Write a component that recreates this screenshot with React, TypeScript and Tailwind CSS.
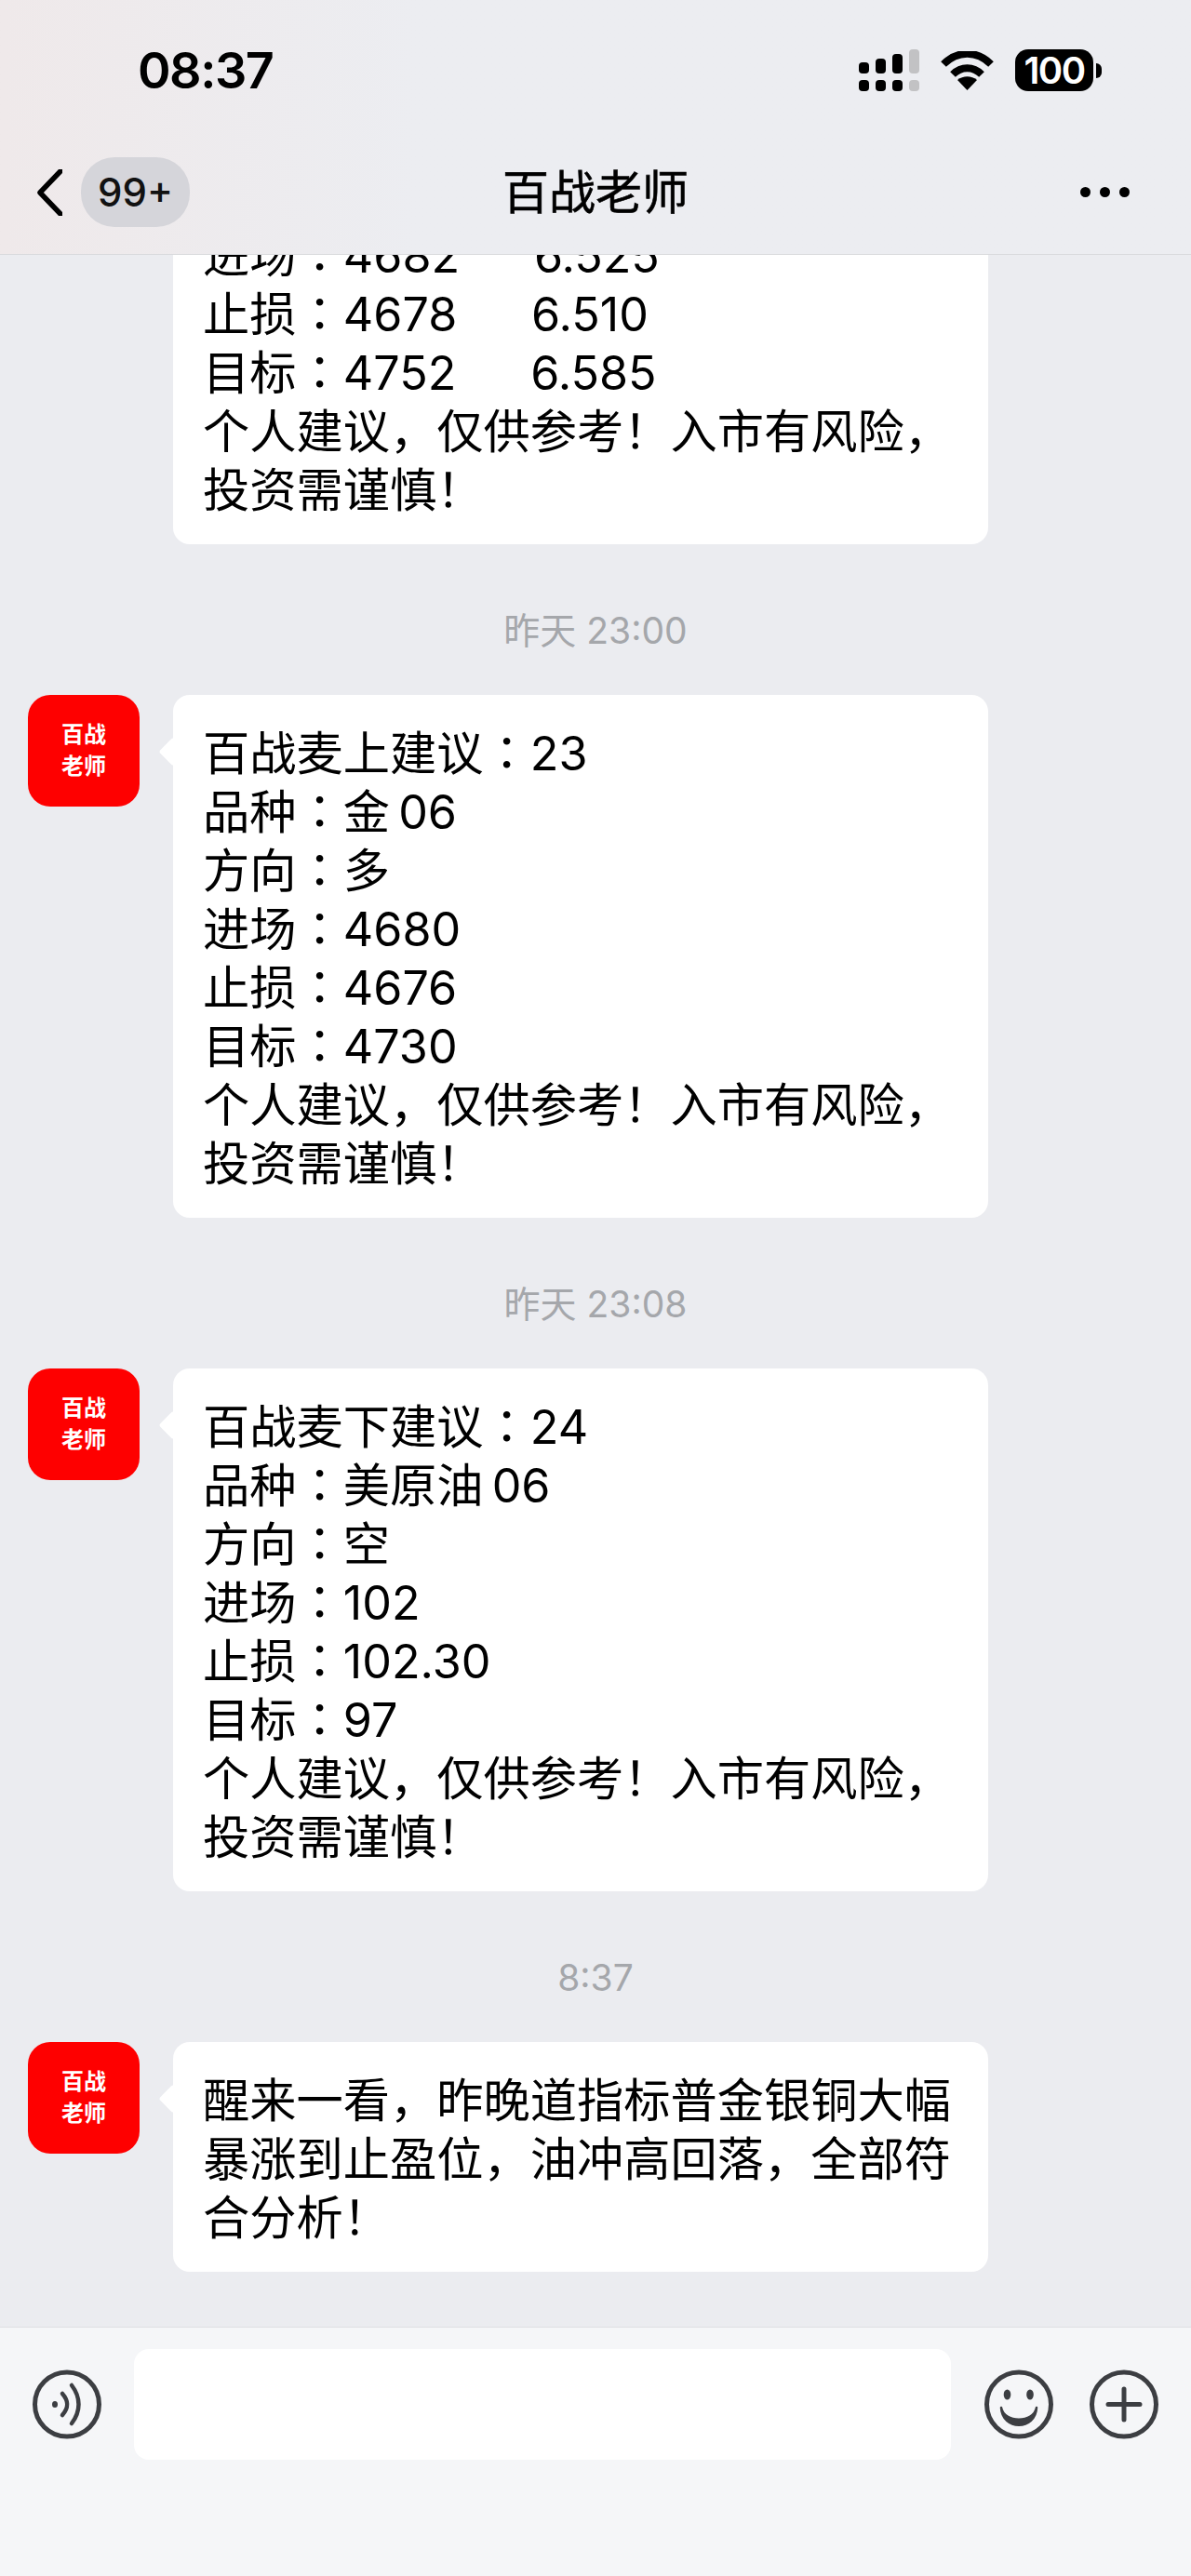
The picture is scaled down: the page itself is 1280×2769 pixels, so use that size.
import { type ReactNode } from 'react';

const FONT = "font-['Inter','Noto_Sans_CJK_SC',sans-serif]";

const NOTICE = '个人建议，仅供参考！入市有风险，\n投资需谨慎！';

const messages = [
  {
    time: '昨天 23:00',
    text: `百战麦上建议：23\n品种：金\u200906\n方向：多\n进场：4680\n止损：4676\n目标：4730\n${NOTICE}`,
  },
  {
    time: '昨天 23:08',
    text: `百战麦下建议：24\n品种：美原油\u200906\n方向：空\n进场：102\n止损：102.30\n目标：97\n${NOTICE}`,
  },
  {
    time: '8:37',
    text: '醒来一看，昨晚道指标普金银铜大幅暴涨到止盈位，油冲高回落，全部符合分析！',
  },
];

// the SC face pushes the full-width colon to the left of its box, the JP one centres it.
// inline-block with a short line height keeps the other font's metrics out of the line box.
function BubbleText({ text }: { text: string }) {
  return (
    <>
      {text.split('\n').map((line, i) => {
        const [label, value] = line.split('：');
        return (
          <div key={i}>
            {value === undefined ? (
              line
            ) : (
              <>
                <span>{label}</span>
                <span className="inline-block font-['Noto_Sans_CJK_JP'] leading-[50px]">：</span>
                <span>{value}</span>
              </>
            )}
          </div>
        );
      })}
    </>
  );
}

function Signal() {
  return (
    <svg width="65" height="45" viewBox="0 0 65 45" className="block">
      <g fill="#000">
        <rect x="0" y="14" width="11" height="12" rx="4" />
        <rect x="18" y="10" width="11" height="16" rx="4" />
        <rect x="36" y="5" width="11" height="21" rx="4" />
        <rect x="0" y="33" width="11" height="12" rx="4" />
        <rect x="18" y="33" width="11" height="12" rx="4" />
        <rect x="36" y="33" width="11" height="12" rx="4" />
      </g>
      <g fill="#c2c2c4">
        <rect x="54" y="0" width="11" height="26" rx="4" />
        <rect x="54" y="33" width="11" height="12" rx="4" />
      </g>
    </svg>
  );
}

function Wifi() {
  return (
    <svg width="57" height="42" viewBox="0 0 57 42" className="block">
      <path d="M3 14 C18 -1 39 -1 54 14" fill="none" stroke="#000" strokeWidth="8" strokeLinecap="butt" />
      <path d="M13 25 C22 16 35 16 44 25" fill="none" stroke="#000" strokeWidth="8" strokeLinecap="butt" />
      <path d="M18 31 C24 26 33 26 39 31 L28.5 42 Z" fill="#000" />
    </svg>
  );
}

function Battery() {
  return (
    <div className="flex items-center">
      <div className="flex h-[45px] w-[84px] items-center justify-center rounded-[14px] bg-black text-[40px] font-semibold leading-none tracking-[-1.5px] text-white">
        100
      </div>
      <div className="ml-[3px] h-[16px] w-[6px] rounded-r-full bg-black" />
    </div>
  );
}

function ActionIcon({ children }: { children: ReactNode }) {
  return (
    <svg width="74" height="75" viewBox="0 0 74 75" className="block shrink-0" fill="none">
      <circle cx="37" cy="37.5" r="34.5" stroke="#3c3e42" strokeWidth="5" />
      {children}
    </svg>
  );
}

function Bubble({ text }: { text: string }) {
  return (
    <div className="flex items-start pl-[30px]">
      <div className="flex h-[120px] w-[120px] shrink-0 flex-col items-center justify-center rounded-[24px] bg-[#fe0000] text-[24px] font-bold leading-[34px] text-white">
        <span>百战</span>
        <span>老师</span>
      </div>
      <div className="relative ml-[36px] w-[876px] whitespace-pre-wrap rounded-[18px] bg-white pb-[27px] pl-[32px] pr-[28px] pt-[31px] text-[50.25px] leading-[63px] text-black">
        <div className="absolute left-[-11px] top-[50px] h-[22px] w-[22px] rotate-45 rounded-[3px] bg-white" />
        <BubbleText text={text} />
      </div>
    </div>
  );
}

export default function App() {
  return (
    <div className={`${FONT} flex h-[2769px] w-[1280px] flex-col overflow-hidden bg-[#ebecf0]`}>
      <header className="h-[274px] shrink-0 border-b border-[#d9dadd] bg-linear-to-r from-[#efe9ea] to-[#ecedf1] to-[35%]">
        <div className="h-[53px]" />
        <div className="flex h-[45px] items-center justify-between pl-[148px] pr-[96px]">
          <span className="text-[54px] font-semibold leading-none tracking-[-1.5px] text-black">08:37</span>
          <div className="flex items-center gap-[23px]">
            <Signal />
            <Wifi />
            <Battery />
          </div>
        </div>
        <div className="mt-[71px] grid h-[75px] grid-cols-[1fr_auto_1fr] items-center pl-[40px] pr-[40px]">
          <div className="flex items-center gap-[20px]">
            <svg width="27" height="50" viewBox="0 0 27 50" fill="none" className="block">
              <path d="M25 2 L3 25 L25 48" stroke="#000" strokeWidth="5.5" strokeLinecap="round" strokeLinejoin="round" />
            </svg>
            <div className="flex h-[75px] w-[117px] items-center justify-center rounded-[36px] bg-[#d5d5da] text-[42px] font-medium leading-none text-[#111]">
              99+
            </div>
          </div>
          <div className="text-[50px] font-normal leading-none text-black [-webkit-text-stroke:0.6px_black]">百战老师</div>
          <div className="flex items-center justify-end gap-[10px] pr-[26px]">
            <span className="h-[11px] w-[11px] rounded-full bg-black" />
            <span className="h-[11px] w-[11px] rounded-full bg-black" />
            <span className="h-[11px] w-[11px] rounded-full bg-black" />
          </div>
        </div>
      </header>

      {/* newest messages sit at the bottom, the first bubble is cut off by the header */}
      <main className="flex min-h-0 flex-1 flex-col justify-end overflow-hidden pb-[59px]">
        <div className="flex items-start pl-[186px]">
          <div className="w-[876px] whitespace-pre-wrap rounded-[18px] bg-white pb-[27px] pl-[32px] pr-[28px] text-[50.25px] leading-[63px] text-black">
            <BubbleText text={`进场：4682     \u20096.525\n止损：4678     \u20096.510\n目标：4752     \u20096.585\n${NOTICE}`} />
          </div>
        </div>
        {messages.map((m) => (
          <div key={m.time}>
            <div className="mb-[44px] mt-[68px] text-center text-[39px] leading-[50px] text-[#a5a7ab]">{m.time}</div>
            <Bubble text={m.text} />
          </div>
        ))}
      </main>

      <footer className="flex h-[268px] shrink-0 items-start border-t border-[#dfe0e3] bg-[#f5f6f8] pl-[35px] pr-[35px] pt-[23px]">
        <div className="mt-[22px]">
          <ActionIcon>
            <ellipse cx="24" cy="37.5" rx="3" ry="3.5" fill="#3c3e42" />
            <path d="M32 26 C39 34 39 41 32 49" stroke="#3c3e42" strokeWidth="4.5" strokeLinecap="round" />
            <path d="M42 17 C52 30 52 45 42 58" stroke="#3c3e42" strokeWidth="4.5" strokeLinecap="round" />
          </ActionIcon>
        </div>
        <div className="ml-[35px] h-[119px] w-[878px] shrink-0 rounded-[16px] bg-white" />
        <div className="ml-[36px] mt-[22px] flex gap-[39px]">
          <ActionIcon>
            <ellipse cx="24.5" cy="27" rx="3.8" ry="5.5" fill="#3c3e42" />
            <ellipse cx="49" cy="27" rx="3.8" ry="5.5" fill="#3c3e42" />
            <path d="M18 41 C19 66 55 66 56 41 C53 58 21 58 18 41 Z" fill="#3c3e42" stroke="#3c3e42" strokeWidth="2.5" strokeLinejoin="round" />
          </ActionIcon>
          <ActionIcon>
            <path d="M37 21 V54 M20 37.5 H54" stroke="#3c3e42" strokeWidth="5" strokeLinecap="round" />
          </ActionIcon>
        </div>
      </footer>
    </div>
  );
}
